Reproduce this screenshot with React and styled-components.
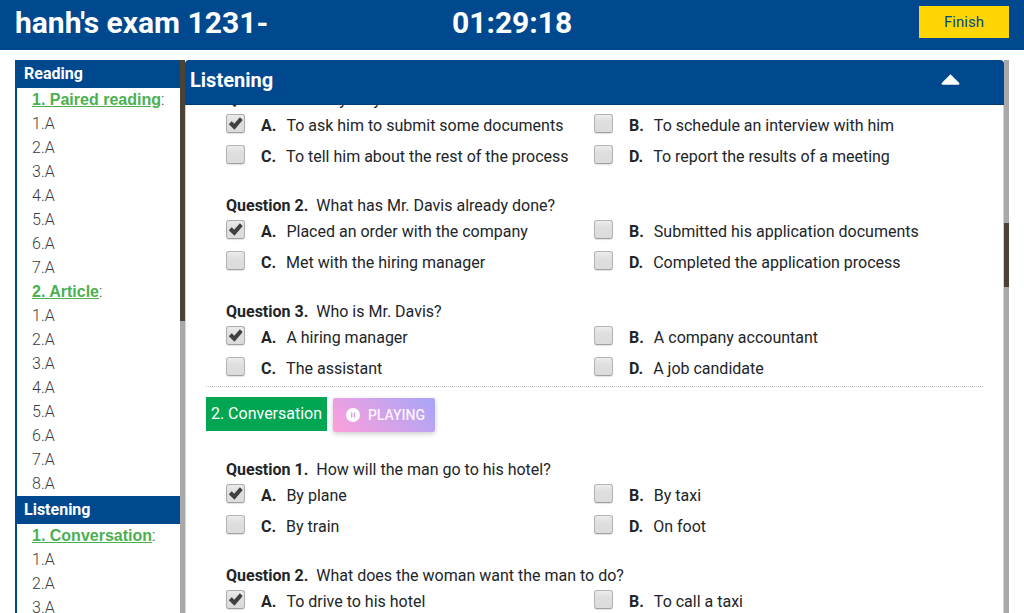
import React from 'react';
import styled, { createGlobalStyle } from 'styled-components';

const Global = createGlobalStyle`
  * { box-sizing: border-box; }
  html, body { margin: 0; height: 613px; overflow: hidden; background: #fff; }
  body { font-family: Roboto, sans-serif; font-size: 16px; line-height: 24px; color: #212529; }
`;

const Page = styled.div`
  height: 613px;
  display: flex;
  flex-direction: column;
  overflow: hidden;
`;

const TopBar = styled.header`
  flex: none;
  height: 50px;
  padding: 0 15px;
  display: grid;
  grid-template-columns: 437px 1fr auto;
  background: #00498f;
  color: #fff;
`;

const BigText = styled.div`
  font-size: 30px;
  font-weight: 700;
  line-height: 45px;
  white-space: nowrap;
`;

const FinishButton = styled.button`
  width: 90px;
  height: 32px;
  margin-top: 6px;
  padding: 0;
  border: 0;
  background: #ffd503;
  color: #00498f;
  font: 400 15px/32px Roboto, sans-serif;
`;

const Body = styled.div`
  flex: 1;
  min-height: 0;
  display: flex;
  padding: 10px 15px 0;
`;

const Sidebar = styled.nav`
  width: 165px;
  flex: none;
  border-left: 2px solid #00498f;
  overflow: hidden;
`;

const SideHeading = styled.h2`
  height: 28px;
  margin: 0;
  padding-left: 7px;
  background: #00498f;
  color: #fff;
  font-size: 16px;
  font-weight: 700;
  line-height: 28px;
`;

const SideRow = styled.div`
  height: 24px;
  padding-left: 15px;
  font-weight: 300;
  color: #3a3d41;
  white-space: nowrap;
`;

const SideLink = styled.a`
  color: #4caf50;
  font-weight: 700;
  font-family: "Liberation Sans", sans-serif;
  text-decoration: underline;
`;

const Track = styled.div`
  width: 5px;
  flex: none;
  padding-top: ${(p) => p.$offset}px;
  background: #a9a9a9;
`;

const Thumb = styled.div`
  height: ${(p) => p.$size}px;
  background: #4a4336;
`;

const Panel = styled.main`
  flex: 1;
  min-width: 0;
  display: flex;
  flex-direction: column;
  overflow: hidden;
  border-radius: 4px 4px 0 0;
`;

const PanelHeader = styled.div`
  flex: none;
  height: 45px;
  padding: 0 44px 4px 5px;
  display: flex;
  align-items: center;
  justify-content: space-between;
  border-bottom: 1px solid #003c78;
  background: #00498f;
  color: #fff;
  font-size: 20px;
  font-weight: 700;
`;

const Content = styled.div`
  flex: 1;
  min-height: 0;
  overflow: hidden;
  padding: 0 20px;
  border: solid #d3d3d3;
  border-width: 0 1px;
`;

const Scrolled = styled.div`
  margin-top: -17px;
`;

const Question = styled.section`
  height: ${(p) => (p.$last ? 86 : 106)}px;
  padding-left: 20px;
`;

const Prompt = styled.div`
  height: 24px;
  white-space: pre;
`;

const Strong = styled.b`
  font-weight: 700;
`;

const Options = styled.div`
  display: grid;
  grid-template-columns: 368px 1fr;
  grid-auto-rows: 31px;
`;

const Option = styled.label`
  display: flex;
  padding-top: 2px;
  white-space: nowrap;
`;

const Box = styled.span`
  width: 19px;
  height: 19px;
  margin: 0 16px 0 0;
  flex: none;
  display: block;
  border: 1px solid ${(p) => (p.$checked ? '#adadad' : '#b4b4b4')};
  border-bottom-color: #a0a0a0;
  border-radius: 3px;
  background: linear-gradient(#ececec, #dedede 40%, #dcdcdc);
  box-shadow: 0 1px 1px rgba(0, 0, 0, 0.12);
`;

const Letter = styled(Strong)`
  margin-right: 10px;
`;

const SectionHead = styled.div`
  height: 72px;
  padding-top: 10px;
  display: flex;
  align-items: flex-start;
  border-top: 1px dotted #bdbdbd;
`;

const SectionTag = styled.div`
  width: 121px;
  height: 34px;
  background: #00a651;
  color: #fff;
  line-height: 34px;
  text-align: center;
`;

const PlayButton = styled.button`
  width: 102px;
  height: 34px;
  margin: 1px 0 0 6px;
  padding: 0 10px 0 13px;
  display: flex;
  align-items: center;
  justify-content: space-between;
  border: 0;
  border-radius: 2px;
  background: linear-gradient(45deg, #ff9fdb, #a6a5f8);
  box-shadow: 0 2px 5px rgba(0, 0, 0, 0.2);
  color: #fbf2fd;
  font: 500 14px/34px Roboto, sans-serif;
`;

const Tick = () => (
  <svg width="17" height="17" viewBox="0 0 17 17" display="block">
    <path d="M1.8 9.2 4.7 6.3 7.2 8.7 12.9 2.2 15.7 4.9 7.5 14.8Z" fill="#404040" />
  </svg>
);

const PauseIcon = () => (
  <svg width="14" height="14" viewBox="0 0 14 14">
    <circle cx="7" cy="7" r="7" fill="#fff" />
    <path d="M4.9 4.6h1.5v4.8H4.9zM7.8 4.6h1.5v4.8H7.8z" fill="#d5a2e5" />
  </svg>
);

const CaretIcon = styled.svg`
  margin-bottom: 1px;
`;

const Caret = () => (
  <CaretIcon width="19" height="11" viewBox="0 0 19 11">
    <path d="M9.5 0.2 18 8.7q1.2 1.9-.8 2.1H1.8Q-.2 10.6 1 8.7Z" fill="#fff" />
  </CaretIcon>
);

const groups = [
  { heading: 'Reading', parts: [{ name: '1. Paired reading', count: 7 }, { name: '2. Article', count: 8 }] },
  { heading: 'Listening', parts: [{ name: '1. Conversation', count: 3 }] },
];

const first = [
  { n: 1, text: 'Why may the caller need to see him?', options: ['To ask him to submit some documents', 'To schedule an interview with him', 'To tell him about the rest of the process', 'To report the results of a meeting'] },
  { n: 2, text: 'What has Mr. Davis already done?', options: ['Placed an order with the company', 'Submitted his application documents', 'Met with the hiring manager', 'Completed the application process'] },
  { n: 3, last: true, text: 'Who is Mr. Davis?', options: ['A hiring manager', 'A company accountant', 'The assistant', 'A job candidate'] },
];

const second = [
  { n: 1, text: 'How will the man go to his hotel?', options: ['By plane', 'By taxi', 'By train', 'On foot'] },
  { n: 2, text: 'What does the woman want the man to do?', options: ['To drive to his hotel', 'To call a taxi'] },
];

const QuestionBlock = ({ q }) => (
  <Question $last={q.last}>
    <Prompt><Strong>Question {q.n}.</Strong>{'  '}{q.text}</Prompt>
    <Options>
      {q.options.map((text, i) => (
        <Option key={text}>
          <Box $checked={i === 0}>{i === 0 && <Tick />}</Box>
          <Letter>{'ABCD'[i]}.</Letter>
          {text}
        </Option>
      ))}
    </Options>
  </Question>
);

export default function App() {
  return (
    <Page>
      <Global />
      <TopBar>
        <BigText>hanh's exam 1231-</BigText>
        <BigText>01:29:18</BigText>
        <FinishButton>Finish</FinishButton>
      </TopBar>
      <Body>
        <Sidebar>
          {groups.map((g) => (
            <React.Fragment key={g.heading}>
              <SideHeading>{g.heading}</SideHeading>
              {g.parts.map((p) => (
                <React.Fragment key={p.name}>
                  <SideRow><SideLink>{p.name}</SideLink>:</SideRow>
                  {Array.from({ length: p.count }, (_, i) => (
                    <SideRow key={i}>{i + 1}.A</SideRow>
                  ))}
                </React.Fragment>
              ))}
            </React.Fragment>
          ))}
        </Sidebar>
        <Track $offset={0}><Thumb $size={261} /></Track>
        <Panel>
          <PanelHeader>Listening<Caret /></PanelHeader>
          <Content>
            <Scrolled>
              {first.map((q) => <QuestionBlock key={q.n} q={q} />)}
              <SectionHead>
                <SectionTag>2. Conversation</SectionTag>
                <PlayButton><PauseIcon />PLAYING</PlayButton>
              </SectionHead>
              {second.map((q) => <QuestionBlock key={q.n} q={q} />)}
            </Scrolled>
          </Content>
        </Panel>
        <Track $offset={163}><Thumb $size={64} /></Track>
      </Body>
    </Page>
  );
}
